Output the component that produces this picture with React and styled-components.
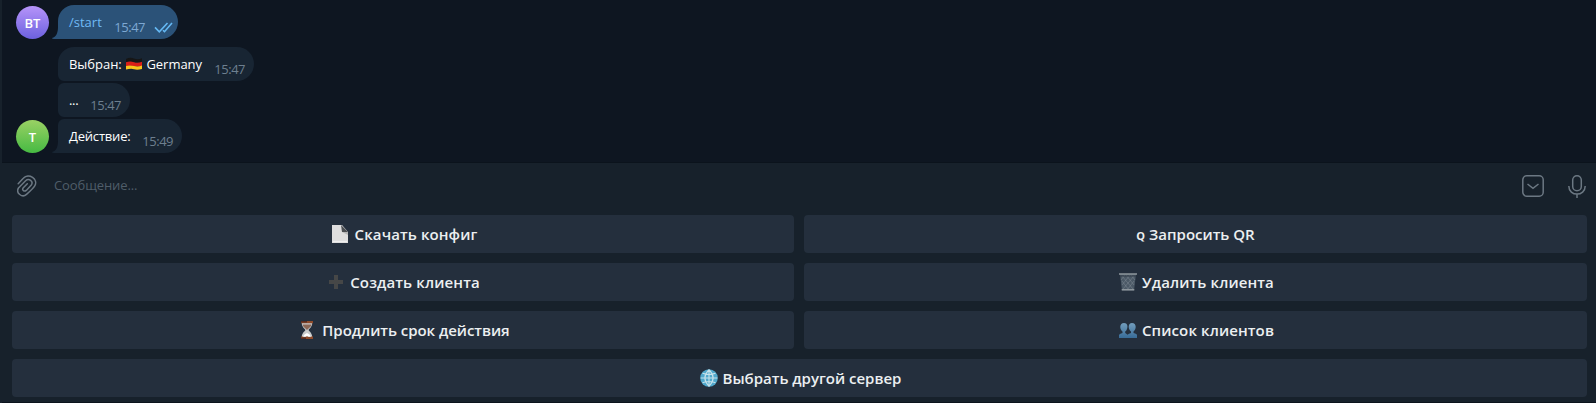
import React from "react";
import styled, { createGlobalStyle } from "styled-components";

const Global = createGlobalStyle`
  * { box-sizing: border-box; }
  html, body { margin: 0; height: 403px; overflow: hidden; background: #0e1621; }
  body { font-family: "Open Sans", "Noto Sans", sans-serif; font-size: 13px; color: #fff; }
  svg { display: block; flex: none; }
`;

const Window = styled.div`
  display: flex;
  flex-direction: column;
  width: 1596px;
  height: 403px;
  border-left: 2px solid #17212b;
  background: #0e1621;
`;

const Chat = styled.main`
  display: flex;
  flex-direction: column;
  height: 162px;
  padding: 5px 0 0 14px;
`;

const MessageRow = styled.div`
  display: flex;
  align-items: flex-end;
  height: 34px;
  margin-bottom: ${(p) => p.$gap || 0}px;
`;

const AvatarSlot = styled.div`
  width: 42px;
  flex: none;
`;

const Avatar = styled.div`
  width: 33px;
  height: 33px;
  border-radius: 50%;
  background: linear-gradient(${(p) => p.$from}, ${(p) => p.$to});
  font-weight: 600;
  font-size: 13px;
  line-height: 35px;
  text-align: center;
`;

const Bubble = styled.div`
  position: relative;
  display: flex;
  justify-content: space-between;
  width: ${(p) => p.$width}px;
  height: 34px;
  padding: 0 ${(p) => (p.$own ? 5 : 9)}px 0 11px;
  border-radius: ${(p) => (p.$first ? 16 : 6)}px 17px 17px ${(p) => (p.$tail ? 0 : 6)}px;
  background: ${(p) => (p.$own ? "#2b5278" : "#182533")};
`;

const Tail = styled.svg`
  position: absolute;
  left: -6px;
  bottom: 0;
`;

const Body = styled.span`
  display: flex;
  align-items: center;
  height: 34px;
  padding-bottom: ${(p) => p.$lift || 0}px;
  white-space: pre;
  letter-spacing: ${(p) => p.$spacing || 0}px;
  color: ${(p) => (p.$own ? "#70baf5" : "#fff")};
`;

const Meta = styled.span`
  display: flex;
  gap: 9px;
  padding-top: 13px;
  line-height: 18px;
  font-size: 13px;
  letter-spacing: -0.5px;
  color: ${(p) => (p.$own ? "#7da8d3" : "#6d7f8f")};
`;

const Composer = styled.div`
  display: flex;
  align-items: center;
  height: 46px;
  padding: 1px 10px 0 15px;
  border-top: 1px solid #0b131c;
  background: #17212b;
  color: #4f5d69;
`;

const Placeholder = styled.span`
  flex: 1;
  margin-left: 17px;
  padding-bottom: 3px;
  letter-spacing: -0.1px;
`;

const ComposerIcons = styled.div`
  display: flex;
  gap: 24px;
`;

const Keyboard = styled.div`
  display: grid;
  flex: 1;
  grid-template-columns: 782px 783px;
  grid-auto-rows: 38px;
  gap: 10px;
  padding: 7px 0 0 10px;
  border-bottom: 1px solid #0b131c;
  background: #17212b;
`;

const Key = styled.button`
  display: flex;
  align-items: center;
  justify-content: center;
  grid-column: ${(p) => (p.$wide ? "1 / -1" : "auto")};
  padding: 0 0 0 ${(p) => p.$shift ?? 2}px;
  border: 0;
  border-radius: 4px;
  background: #242f3d;
  color: #eceff1;
  font: 600 15px/20px "Open Sans", "Noto Sans", sans-serif;
  letter-spacing: ${(p) => p.$spacing || 0}px;
`;

const KeyIcon = styled.span`
  flex: none;
  margin-right: ${(p) => p.$gap}px;
`;

const SmallQ = styled.span`
  display: block;
  padding-top: 3px;
  font-size: 11px;
  font-weight: 700;
`;

const Flag = () => (
  <svg width="18" height="14" viewBox="0 0 18 14">
    <path d="M1 2Q5 0 9 1.5T17 1.3V5Q12 6 9 5.2T1 5.5Z" fill="#161616" />
    <path d="M1 5.2Q5 4 9 5.2T17 4.8V9Q12 10 9 9.2T1 9.2Z" fill="#d91e18" />
    <path d="M1 9Q5 7.8 9 9T17 8.4V12Q12 13.2 9 12.2T1 12.6Z" fill="#f8c51c" />
  </svg>
);

const Checks = () => (
  <svg width="19" height="18" viewBox="0 0 19 18" fill="none" stroke="#65b9f4" strokeWidth="1.6">
    <path d="M1 9.4L5.3 13.8L13.5 5M9 12.2L10.5 13.7L18 5" />
  </svg>
);

const Clip = () => (
  <svg width="20" height="22" viewBox="0 0 20 22" fill="none" stroke="#6c7883" strokeWidth="1.5" strokeLinecap="round">
    <path d="M1.2 8.7L6.3 3.3C11.5-2.5 22 4.2 17.6 11.1C16.6 12.7 12.4 16.8 9.5 19.4C5.2 23.2-1.5 18 1.5 13L8.6 5.8C11.9 2.8 16.8 6.4 14.3 10L9.3 15.4C7.3 17.1 4.7 15 6.1 13L10.3 8.7" />
  </svg>
);

const HideKeyboard = () => (
  <svg width="22" height="22" viewBox="0 0 22 22" fill="none" stroke="#6c7883" strokeWidth="1.5">
    <rect x=".8" y=".8" width="20.4" height="20.4" rx="4" />
    <path d="M5.5 9L11 13.3L16.5 9" />
  </svg>
);

const Mic = () => (
  <svg width="18" height="23" viewBox="0 0 18 23" fill="none" stroke="#6c7883" strokeWidth="1.5">
    <rect x="4.7" y=".8" width="8.6" height="15" rx="4.3" />
    <path d="M.8 11C.8 21.8 17.2 21.8 17.2 11M9 19V23" />
  </svg>
);

const Page = () => (
  <svg width="16" height="18" viewBox="0 0 16 18">
    <path d="M0 0H10L16 7V18H0Z" fill="#dedede" />
    <path d="M9 0L16 7H10Z" fill="#4c4f52" />
    <path d="M9 0L10 7L16 10V7H10Z" fill="#b6b6b6" />
    <path d="M1 16.5H15" stroke="#eee" />
  </svg>
);

const Plus = () => (
  <svg width="14" height="14" viewBox="0 0 14 14">
    <path d="M5 0H9V5H14V9H9V14H5V9H0V5H5Z" fill="#464747" />
  </svg>
);

const Hourglass = () => (
  <svg width="12" height="18" viewBox="0 0 12 18">
    <path d="M.8 2H11.2C11.2 6 8.4 7.4 7.5 9C8.4 10.6 11.2 12 11.2 16H.8C.8 12 3.6 10.6 4.5 9C3.6 7.4.8 6 .8 2Z" fill="#c9cbcc" />
    <path d="M1.5 3.5H10.5C9.9 6.5 7 7.5 6 9C5 7.5 2.1 6.5 1.5 3.5Z" fill="#8b6756" />
    <path d="M2 15.5Q3 13 6 12Q9 13 10 15.5Z" fill="#fff" />
    <path d="M0 0H12V2.3H0ZM0 15.2L4 16.2L6 15.2L8 16.2L12 15.2V18H0Z" fill="#8e4a2a" />
    <path d="M0 0H6V1.5H0ZM0 16.5H5V18H0Z" fill="#572c20" />
  </svg>
);

const Trash = () => (
  <svg width="18" height="18" viewBox="0 0 18 18">
    <path d="M1 1H17L15 17.5H3Z" fill="#4b5966" />
    <path d="M3 3L14 16M7 2L15 12M12 2L16 7M3 8L10 17M15 3L4 16M11 2L3 12M6 2L2 7M15 8L8 17" stroke="#808b94" strokeWidth=".5" />
    <path d="M0 1H18M2.7 16.8H15.3" stroke="#8d969c" strokeWidth="1.4" />
    <path d="M1.2 3H16.8" stroke="#313b46" />
  </svg>
);

const People = () => (
  <svg width="18" height="15" viewBox="0 0 18 15">
    <defs>
      <linearGradient id="peopleBlue" x2="0" y2="1">
        <stop stopColor="#729dbc" />
        <stop offset="1" stopColor="#386c98" />
      </linearGradient>
    </defs>
    <path d="M5 0C8.5 0 9 3.5 8 6Q7.3 8 6.2 8.5V10L9 12V15H0V12Q0 10.8 3.5 10V8.5C.5 6.5 .2 0 5 0Z" fill="url(#peopleBlue)" />
    <path d="M13 0C17.8 0 17.5 6.5 14.5 8.5V10Q18 10.8 18 12.2V15H8.5V12Q8.7 10.8 12 10V8.5C9 6.5 8.6 0 13 0Z" fill="url(#peopleBlue)" />
  </svg>
);

const Globe = () => (
  <svg width="18" height="18" viewBox="0 0 18 18">
    <circle cx="9" cy="9" r="8.8" fill="#50a8cc" />
    <path d="M9 .7V17.3M.7 9H17.3M2.5 4.3Q9 6.6 15.5 4.3M2.5 13.7Q9 11.4 15.5 13.7M9 .7Q.8 9 9 17.3M9 .7Q17.2 9 9 17.3" fill="none" stroke="#c6e2eb" strokeWidth="1.1" />
  </svg>
);

const Message = ({ own, first, tail, width, avatar, gap, spacing, lift, time, children }) => (
  <MessageRow $gap={gap}>
    <AvatarSlot>{avatar}</AvatarSlot>
    <Bubble $own={own} $first={first} $tail={tail} $width={width}>
      {tail && (
        <Tail width="7" height="12" viewBox="0 0 7 12">
          <path d="M7 0H6C6 6 4 10 0 11Q0 12 2 12H7Z" fill={own ? "#2b5278" : "#182533"} />
        </Tail>
      )}
      <Body $own={own} $spacing={spacing} $lift={lift}>{children}</Body>
      <Meta $own={own}>{time}{own && <Checks />}</Meta>
    </Bubble>
  </MessageRow>
);

const keys = [
  { icon: <Page />, gap: 7, label: "Скачать конфиг", spacing: 0.1, shift: 3 },
  { icon: <SmallQ>Q</SmallQ>, gap: 4, label: "Запросить QR", shift: 0 },
  { icon: <Plus />, gap: 7, label: "Создать клиента", spacing: 0.13, shift: 3 },
  { icon: <Trash />, gap: 5, label: "Удалить клиента", spacing: 0.12 },
  { icon: <Hourglass />, gap: 9, label: "Продлить срок действия", spacing: -0.04, shift: 5 },
  { icon: <People />, gap: 5, label: "Список клиентов", spacing: 0.12 },
  { icon: <Globe />, gap: 5, label: "Выбрать другой сервер", wide: true },
];

export default function App() {
  return (
    <>
      <Global />
      <Window>
        <Chat>
          <Message own first tail width={120} gap={8} time="15:47" lift={1}
            avatar={<Avatar $from="#b694f9" $to="#6c61df">BT</Avatar>}>/start</Message>
          <Message first width={196} gap={2} spacing={-0.03} time="15:47">Выбран: <Flag /> Germany</Message>
          <Message width={72} gap={2} spacing={-0.3} time="15:47">...</Message>
          <Message tail width={124} spacing={-0.2} time="15:49"
            avatar={<Avatar $from="#9ad164" $to="#46ba43">T</Avatar>}>Действие:</Message>
        </Chat>
        <Composer>
          <Clip />
          <Placeholder>Сообщение...</Placeholder>
          <ComposerIcons><HideKeyboard /><Mic /></ComposerIcons>
        </Composer>
        <Keyboard>
          {keys.map((k) => (
            <Key key={k.label} $wide={k.wide} $spacing={k.spacing} $shift={k.shift}>
              <KeyIcon $gap={k.gap}>{k.icon}</KeyIcon>
              {k.label}
            </Key>
          ))}
        </Keyboard>
      </Window>
    </>
  );
}
